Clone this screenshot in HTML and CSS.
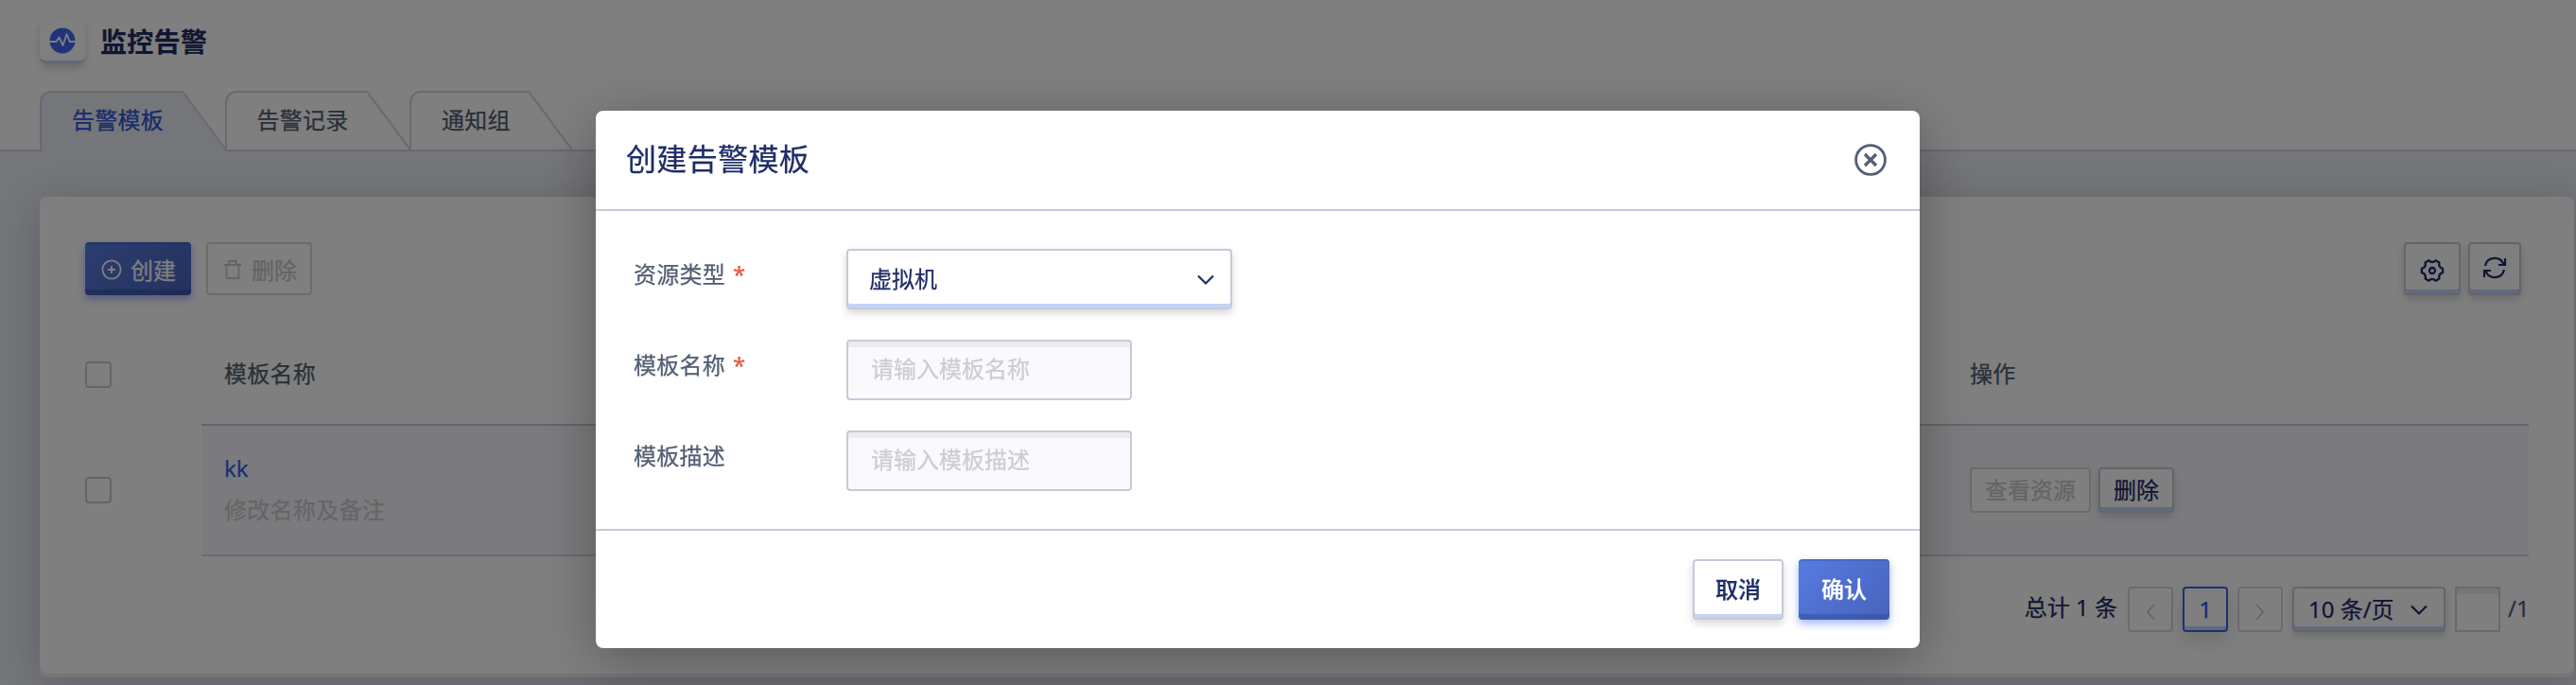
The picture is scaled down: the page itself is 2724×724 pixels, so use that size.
FILE: index.html
```html
<!DOCTYPE html>
<html lang="zh-CN">
<head>
<meta charset="utf-8">
<title>监控告警</title>
<link rel="stylesheet" href="styles.css">
</head>
<body>
<div class="page">
  <header class="header">
    <div class="brand">
      <span class="brand-icon">
        <svg width="28" height="28" viewBox="0 0 28 28"><circle cx="14" cy="14" r="13.5" fill="#4169f5"/><path d="M0 15h7.5l3-4.5 4 8.5L18.5 7l3.2 8H28" fill="none" stroke="#fff" stroke-width="1.8" stroke-linejoin="round"/></svg>
      </span>
      <h1 class="brand-title">监控告警</h1>
    </div>
    <nav class="tabs">
      <a class="tab tab-active"><span class="tab-label">告警模板</span><svg class="tab-edge" width="48" height="64" viewBox="0 0 48 64"><path class="edge-fill" d="M0 1L46 62V64H0z"/><path class="edge-line" d="M.5 0L47 62.5"/></svg></a>
      <a class="tab"><span class="tab-label">告警记录</span><svg class="tab-edge" width="48" height="64" viewBox="0 0 48 64"><path class="edge-line" d="M.5 0L47 62.5"/></svg></a>
      <a class="tab"><span class="tab-label">通知组</span><svg class="tab-edge" width="48" height="64" viewBox="0 0 48 64"><path class="edge-line" d="M.5 0L47 62.5"/></svg></a>
    </nav>
  </header>

  <main class="card">
    <div class="toolbar">
      <button class="btn btn-primary btn-tool"><svg width="22" height="22" viewBox="0 0 22 22" fill="none" stroke="currentColor" stroke-width="1.8"><circle cx="11" cy="11" r="9.6"/><path d="M11 7v8M7 11h8"/></svg>创建</button>
      <button class="btn btn-disabled btn-tool"><svg width="22" height="22" viewBox="0 0 22 22" fill="none" stroke="currentColor" stroke-width="1.8"><path d="M2 6h18M7 6V2h8v4M4.500 6v14h13V6"/></svg>删除</button>
      <div class="toolbar-right">
        <button class="btn btn-default btn-gear"><svg width="26" height="26" viewBox="-13 -13 26 26" fill="none" stroke="currentColor" stroke-width="2.300" stroke-linejoin="round"><path d="M11.100 2.200Q6.200 3.600 7.400 8.500L3.700 10.700Q0 7.200-3.700 10.700L-7.400 8.500Q-6.200 3.600-11.100 2.200V-2.200Q-6.200-3.600-7.400-8.500L-3.700-10.700Q0-7.200 3.700-10.700L7.400-8.500Q6.200-3.600 11.100-2.200z"/><circle r="3"/></svg></button>
        <button class="btn btn-default btn-refresh"><svg width="26" height="24" viewBox="0 0 26 24" fill="none" stroke="currentColor" stroke-width="2.200"><path d="M3 10C5 0 19-1 22.500 8.500M24 2v7h-7M23 14C21 24 7 25 3.500 15.500M2 22v-7h7"/></svg></button>
      </div>
    </div>

    <div class="table">
      <div class="cell-check head-cell"><span class="checkbox"></span></div>
      <div class="row head-row"><span class="col-name">模板名称</span><span class="col-op">操作</span></div>
      <div class="cell-check body-cell"><span class="checkbox"></span></div>
      <div class="row body-row">
        <div class="col-name"><div class="name-link">kk</div><div class="name-note">修改名称及备注</div></div>
        <div class="col-op ops"><button class="btn btn-small btn-disabled">查看资源</button><button class="btn btn-small btn-default">删除</button></div>
      </div>
    </div>

    <div class="pager">
      <span class="pager-total">总计 1 条</span>
      <span class="page-box page-off"><svg width="12" height="22" viewBox="0 0 12 22" fill="none" stroke="currentColor" stroke-width="1.800"><path d="M10 3L3 11l7 8"/></svg></span>
      <span class="page-box page-current">1</span>
      <span class="page-box page-off"><svg width="12" height="22" viewBox="0 0 12 22" fill="none" stroke="currentColor" stroke-width="1.800"><path d="M2 3l7 8-7 8"/></svg></span>
      <span class="page-size btn-default">10 条/页<svg class="chevron" width="18" height="12" viewBox="0 0 18 12" fill="none" stroke="currentColor" stroke-width="2.200"><path d="M1 1.500l8 8 8-8"/></svg></span>
      <span class="page-jump"></span>
      <span class="page-count">/1</span>
    </div>
  </main>
</div>

<div class="overlay">
  <section class="modal">
    <div class="modal-head">
      <h2 class="modal-title">创建告警模板</h2>
      <svg width="34" height="34" viewBox="0 0 34 34" fill="none" stroke="#525e73" stroke-width="2.800"><circle cx="17" cy="17" r="15.400"/><path d="M11 11l12 12M23 11L11 23" stroke-width="3.200"/></svg>
    </div>
    <div class="modal-body">
      <div class="field"><label class="label">资源类型<i class="star">*</i></label><div class="select btn-default">虚拟机<svg class="chevron" width="18" height="12" viewBox="0 0 18 12" fill="none" stroke="currentColor" stroke-width="2.200"><path d="M1 1.500l8 8 8-8"/></svg></div></div>
      <div class="field"><label class="label">模板名称<i class="star">*</i></label><div class="input">请输入模板名称</div></div>
      <div class="field"><label class="label">模板描述</label><div class="input">请输入模板描述</div></div>
    </div>
    <div class="modal-foot">
      <button class="btn btn-default btn-foot">取消</button>
      <button class="btn btn-primary btn-foot">确认</button>
    </div>
  </section>
</div>
</body>
</html>
```
FILE: styles.css
```css
* { box-sizing: border-box; }
body {
  margin: 0;
  overflow: hidden;
  font: 24px/36px "Noto Sans", "Noto Sans CJK SC", sans-serif;
  color: #1f2d66;
  -webkit-text-stroke: .25px;
}
h1, h2 { margin: 0; }
svg { flex: none; display: block; }

.page {
  width: 2724px;
  height: 724px;
  overflow: hidden;
  background: #ebedf5;
}

/* header */
.header {
  height: 160px;
  padding-left: 42px;
  display: flex;
  flex-direction: column;
  justify-content: space-between;
  background: #fff;
  border-bottom: 2px solid #d0d3e2;
}
.brand { display: flex; align-items: center; gap: 16px; padding-top: 20px; }
.brand-icon {
  width: 48px;
  height: 48px;
  padding-top: 2px;
  border-radius: 8px;
  border-bottom: 4px solid #c5d3f5;
  display: flex;
  align-items: center;
  justify-content: center;
  box-shadow: 0 4px 8px rgba(0, 0, 0, .16);
}
.brand-title { font-size: 28px; line-height: 42px; font-weight: 700; letter-spacing: .35px; }

.tabs { display: flex; height: 62px; }
.tab {
  display: flex;
  height: 62px;
  color: #525e73;
}
.tab-label {
  height: 62px;
  padding: 11px 18.5px 0 32px;
  line-height: 36px;
  letter-spacing: .25px;
  border: 2px solid #d0d3e2;
  border-width: 2px 0 0 2px;
  border-radius: 12px 0 0 0;
}
.tab-edge { margin-right: -2px; overflow: visible; }
.edge-fill { fill: #ebedf5; }
.edge-line { fill: none; stroke: #d0d3e2; stroke-width: 2; }
.tab-active { color: #2e55d8; height: 64px; }
.tab-active .tab-label { height: 64px; background: #ebedf5; }

/* card */
.card {
  width: 2680px;
  height: 504px;
  margin: 48px 0 0 42px;
  padding: 48px 48px 0;
  background: #fff;
  border-radius: 8px;
  box-shadow: 0 4px 0 #ebebeb, 0 8px 48px rgba(40, 40, 60, .25);
}
.toolbar { display: flex; gap: 16px; }
.toolbar-right { margin-left: auto; margin-right: 8px; display: flex; gap: 8px; }

.btn {
  display: flex;
  align-items: center;
  justify-content: center;
  padding: 0;
  font: inherit;
  border-radius: 4px;
  border: 2px solid #c5cada;
}
.btn-default {
  color: #1f2d66;
  background: #fff;
  border: 2px solid #c5cada;
  border-radius: 4px;
  box-shadow: inset 0 -4px 0 #c5d3f5, 0 4px 8px rgba(0, 0, 0, .16);
}
.btn-primary {
  color: #fff;
  border: 0;
  background: linear-gradient(135deg, #567be0, #4863bd);
  box-shadow: inset 0 -6px 0 rgba(50, 75, 150, .5), inset 0 2px 0 rgba(50, 75, 150, .3), 0 4px 8px rgba(65, 105, 245, .5);
}
.btn-disabled { color: #c8c8c8; background: #fff; border-color: #d8d8d8; }
.btn-tool { width: 112px; height: 56px; gap: 9px; padding: 4px 0 0 1px; }
.btn-tool svg { margin-top: -2px; }
.btn-gear { width: 60px; height: 56px; padding-top: 4px; }
.btn-refresh { width: 56px; height: 56px; padding-bottom: 3px; }
.btn-small { height: 48px; padding: 0 14px; }

/* table */
.table {
  margin-top: 50px;
  display: grid;
  grid-template-columns: 123px 2461px;
  grid-template-rows: 88px 138px;
}
.cell-check { display: flex; align-items: center; }
.head-cell { padding-bottom: 20px; }
.checkbox { width: 28px; height: 28px; border: 2px solid #c5cada; border-radius: 4px; }
.body-cell { padding-bottom: 2px; }
.row { display: grid; grid-template-columns: 1846px 1fr; padding-left: 24px; border-bottom: 2px solid #c5cada; }
.head-row { padding-top: 15px; color: #525e73; letter-spacing: .25px; }
.body-row { background: #f7f7fb; border-color: #d0d3e2; align-items: center; }
.col-name { padding-bottom: 2px; }
.name-link { color: #3a62ea; line-height: 44px; }
.name-note { color: #cbcbd0; line-height: 44px; letter-spacing: .3px; }
.ops { display: flex; gap: 8px; }

/* pagination */
.pager { display: flex; gap: 10px; margin: 32px 0 0; justify-content: flex-end; width: 2584px; }
.pager-total { line-height: 44px; margin-right: 1px; }
.page-box, .page-jump { width: 48px; height: 48px; border: 2px solid #d8d8d8; border-radius: 4px; }
.page-box { display: flex; align-items: center; justify-content: center; }
.page-off { color: #c8c8c8; padding-top: 5px; }
.page-current {
  color: #2e55d8;
  border-color: #3a62ea;
  box-shadow: inset 0 -4px 0 #c5d3f5, 0 8px 24px rgba(0, 0, 0, .14);
}
.page-size { width: 162px; height: 48px; padding: 0 17px 0 15px; display: flex; align-items: center; justify-content: space-between; }
.page-jump { border-color: #d0d3e2; border-radius: 0; box-shadow: inset 0 6px 0 #ececee; }
.page-count { width: 22px; color: #525e73; line-height: 46px; margin-left: -2px; }
.chevron { margin-top: 2px; }

/* dialog */
.overlay {
  position: fixed;
  inset: 0;
  padding: 117px 64px 0 0;
  display: flex;
  justify-content: center;
  align-items: flex-start;
  background: rgba(0, 0, 0, .5);
}
.modal {
  width: 1400px;
  height: 568px;
  background: #fff;
  border-radius: 8px;
  box-shadow: 0 12px 60px rgba(0, 0, 0, .3);
}
.modal-head {
  height: 106px;
  padding: 0 35px 0 32px;
  display: flex;
  align-items: center;
  justify-content: space-between;
  border-bottom: 2px solid #c5cada;
}
.modal-title { font-size: 32px; line-height: 48px; font-weight: 400; letter-spacing: .35px; padding-bottom: 3px; }
.modal-body {
  height: 338px;
  padding: 40px 40px 0;
  display: flex;
  flex-direction: column;
  gap: 32px;
  border-bottom: 2px solid #c5cada;
}
.field { display: flex; height: 64px; }
.label { width: 225px; padding-top: 9px; color: #525e73; letter-spacing: .25px; }
.star { margin-left: 8px; color: #e8543f; font-style: normal; }
.select { width: 408px; padding: 0 17px 0 22px; display: flex; align-items: center; justify-content: space-between; }
.input {
  width: 302px;
  padding: 11px 24px;
  color: #ccccd4;
  background: #fafafc;
  border: 2px solid #c5cada;
  border-radius: 4px;
  box-shadow: inset 0 6px 0 #ececee;
}
.modal-foot { display: flex; justify-content: flex-end; gap: 16px; padding: 30px 32px 0; }
.btn-foot { width: 96px; height: 64px; font-weight: 500; }
```
